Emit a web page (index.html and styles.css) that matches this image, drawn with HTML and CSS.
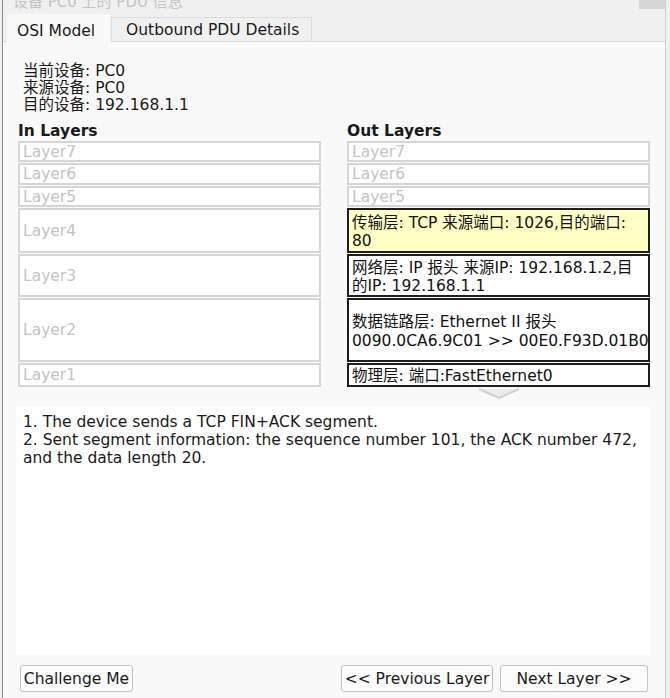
FILE: index.html
```html
<!DOCTYPE html>
<html lang="zh">
  <head>
    <meta charset="UTF-8" />
    <title>PDU 信息</title>
    <link rel="stylesheet" href="styles.css">
  </head>
  <body>
    <div class="frame">
      <div class="titlebar">
        <span class="title">设备 PC0 上的 PDU 信息</span>
        <span class="close"></span>
      </div>

      <!-- 选项卡 -->
      <div class="tabs">
        <div class="tab active">OSI Model</div>
        <div class="tab">Outbound PDU Details</div>
      </div>

      <div class="panel">
        <div class="info">
          <div>当前设备: PC0</div>
          <div>来源设备: PC0</div>
          <div>目的设备: 192.168.1.1</div>
        </div>

        <div class="layers">
          <div class="head">In Layers</div>
          <div class="head">Out Layers</div>

          <div class="cell">Layer7</div>
          <div class="cell">Layer7</div>
          <div class="cell">Layer6</div>
          <div class="cell">Layer6</div>
          <div class="cell">Layer5</div>
          <div class="cell">Layer5</div>
          <div class="cell">Layer4</div>
          <div class="cell on current"><p>传输层: TCP 来源端口: 1026,目的端口:<br />80</p></div>
          <div class="cell">Layer3</div>
          <div class="cell on"><p>网络层: IP 报头 来源IP: 192.168.1.2,目<br />的IP: 192.168.1.1</p></div>
          <div class="cell">Layer2</div>
          <div class="cell on"><p>数据链路层: Ethernet II 报头<br />0090.0CA6.9C01 &gt;&gt; 00E0.F93D.01B0</p></div>
          <div class="cell">Layer1</div>
          <div class="cell on"><p>物理层: 端口:FastEthernet0</p></div>
        </div>

        <div class="arrow">
          <svg width="42" height="12" viewBox="0 0 42 12">
            <path d="M1 1 L21 10 L41 1" fill="#ececec" stroke="#cfcfcf" stroke-width="2" />
          </svg>
        </div>

        <div class="desc">
          1. The device sends a TCP FIN+ACK segment.<br />
          2. Sent segment information: the sequence number 101, the ACK number 472, and the data length 20.
        </div>

        <div class="buttons">
          <button class="btn btn-challenge">Challenge Me</button>
          <div class="spacer"></div>
          <button class="btn btn-prev">&lt;&lt; Previous Layer</button>
          <button class="btn btn-next">Next Layer &gt;&gt;</button>
        </div>
      </div>
    </div>
  </body>
</html>
```

FILE: styles.css
```css
* {
  margin: 0;
  padding: 0;
  box-sizing: border-box;
}

body {
  width: 670px;
  height: 698px;
  overflow: hidden;
  background-color: #f0f0f0;
  font-family: "DejaVu Sans", "Noto Sans CJK SC", sans-serif;
  font-size: 15.5px;
  color: #1a1a1a;
  padding-left: 2px;
}

.frame {
  width: 664px;
  height: 698px;
  border-left: 1px solid #8c8c8c;
  border-right: 1px solid #cfcfcf;
}

.titlebar {
  height: 14px;
  overflow: hidden;
  display: flex;
  justify-content: space-between;
}

.title {
  font-size: 15px;
  line-height: 14px;
  margin-top: -5px;
  margin-left: 10px;
  color: #c4c4c4;
}

.close {
  width: 26px;
  height: 9px;
  background-color: #d6d6d6;
}

.tabs {
  height: 28px;
  display: flex;
  align-items: flex-end;
  padding-left: 3px;
  border-bottom: 1px solid #dcdcdc;
}

.tab {
  height: 24px;
  padding: 0 12px 0 14px;
  line-height: 25px;
  border: 1px solid #dcdcdc;
  border-bottom: none;
  background-color: #f0f0f0;
}

.tab.active {
  height: 29px;
  margin-bottom: -1px;
  padding: 0 15px 0 10px;
  line-height: 34px;
  background-color: #f9f9f9;
  border-color: #f0f0f0;
}

.panel {
  height: 656px;
  background-color: #f9f9f9;
  padding: 21px 12px 0 12px;
}

.info {
  line-height: 17px;
  padding-left: 8px;
}

.layers {
  margin-top: 9px;
  margin-left: 3px;
  display: grid;
  grid-template-columns: 303px 303px;
  grid-template-rows: 17px 21px 22px 21px 45px 43px 64px 24px;
  column-gap: 26px;
  row-gap: 1px;
}

.head {
  font-weight: bold;
  line-height: 17px;
}

.cell {
  border: 2px solid #d6d6d6;
  background-color: #fff;
  color: #c4c4c4;
  padding: 0 3px;
  display: flex;
  align-items: center;
  line-height: 18px;
  white-space: nowrap;
}

.cell.on {
  border-color: #1e1e1e;
  color: #111;
  padding-top: 3px;
  line-height: 18.5px;
}

.cell.current {
  background-color: #ffffc6;
}

.arrow {
  height: 20px;
  padding-left: 463px;
  padding-top: 1px;
}

.arrow svg {
  display: block;
}

.desc {
  height: 248px;
  margin-left: 1px;
  margin-right: 3px;
  background-color: #fff;
  padding: 6px 7px;
  line-height: 18px;
}

.buttons {
  display: flex;
  margin-top: 10px;
  padding-left: 5px;
  padding-right: 5px;
  gap: 7px;
}

.spacer {
  flex: 1;
}

.btn {
  height: 27px;
  font-family: "DejaVu Sans", sans-serif;
  font-size: 15.5px;
  color: #1a1a1a;
  background-color: #fcfcfc;
  border: 1px solid #c2c2c2;
  border-radius: 3px;
}

.btn-challenge {
  width: 113px;
}

.btn-prev {
  width: 152px;
}

.btn-next {
  width: 148px;
}
```
